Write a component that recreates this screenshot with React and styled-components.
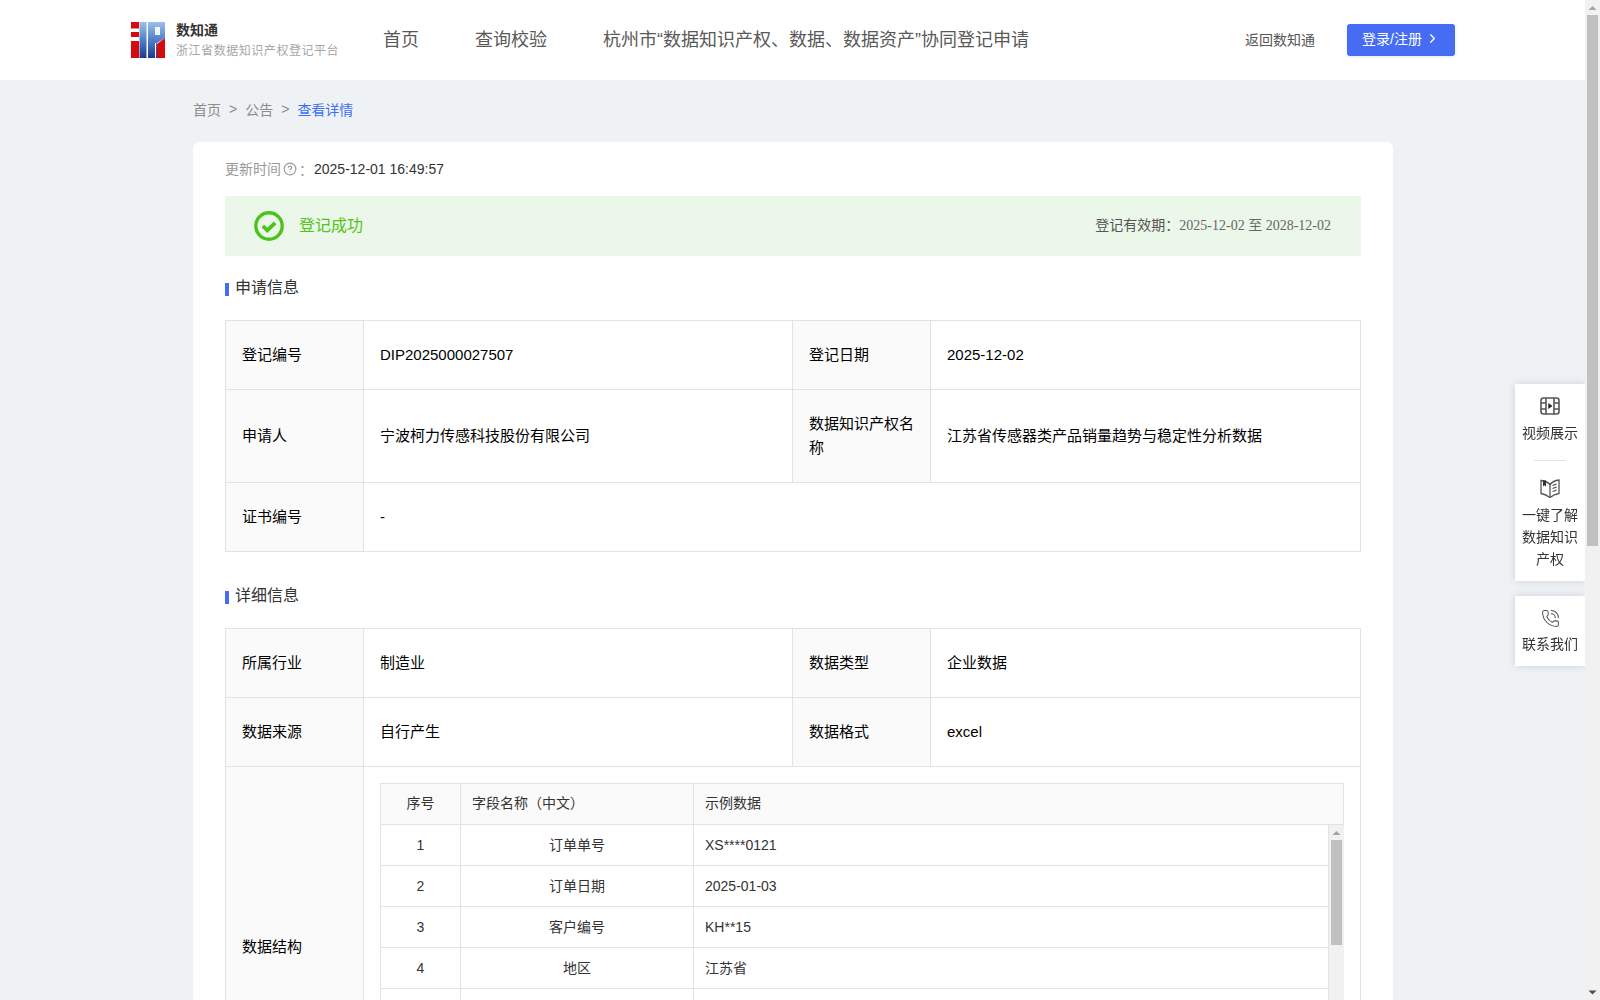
import React from "react";
import styled, { createGlobalStyle } from "styled-components";
import { ChevronRight, CircleHelp, PhoneCall } from "lucide-react";

const Global = createGlobalStyle`
  body {
    margin: 0;
    padding-right: 15px;
    background: #eef2f5;
    font-family: "Liberation Sans", "Noto Sans CJK SC", sans-serif;
    font-size: 14px;
    color: #333;
  }
  * { box-sizing: border-box; }
`;

const Header = styled.header`
  height: 80px;
  background: #fff;
  display: flex;
  align-items: center;
  padding: 0 130px 0 131px;
`;
const Brand = styled.div`
  display: flex;
  align-items: center;
  gap: 11px;
  width: 252px;
`;
const BrandText = styled.div`
  display: flex;
  flex-direction: column;
  gap: 4px;
`;
const BrandName = styled.div`
  font-size: 14px;
  line-height: 18px;
  font-weight: 700;
  color: #333;
`;
const BrandSub = styled.div`
  font-size: 12px;
  line-height: 17px;
  letter-spacing: 0.55px;
  color: #a6a6a6;
  white-space: nowrap;
`;
const Nav = styled.nav`
  display: flex;
  gap: 56px;
  flex: 1;
`;
const NavItem = styled.a`
  font-size: 18px;
  line-height: 24px;
  color: #595959;
  white-space: nowrap;
`;
const BackLink = styled.a`
  font-size: 14px;
  color: #555;
  margin-right: 32px;
  padding-bottom: 2px;
`;
const LoginButton = styled.button`
  width: 108px;
  height: 32px;
  border: 0;
  border-radius: 3px;
  background: #456cf3;
  color: #fff;
  font: inherit;
  font-size: 14px;
  display: flex;
  align-items: center;
  justify-content: center;
  gap: 3px;
  padding: 0 0 4px;
  box-shadow: 0 1px 3px rgba(69, 108, 243, 0.15);
`;

const Main = styled.main`
  width: 1200px;
  margin-left: 193px;
  padding-bottom: 40px;
`;
const Crumbs = styled.div`
  height: 62px;
  display: flex;
  align-items: center;
  gap: 8px;
  padding-bottom: 4px;
  color: #8c8c8c;
  font-size: 14px;
`;
const CrumbActive = styled.span`
  color: #3f6ef5;
`;
const Card = styled.section`
  background: #fff;
  border-radius: 6px;
  padding: 16px 32px 40px;
`;
const UpdateLine = styled.div`
  display: flex;
  align-items: center;
  height: 22px;
  color: #9a9a9a;
  gap: 2px;
`;
const UpdateLabel = styled.span`
  margin-top: -2px;
`;
const UpdateValue = styled.span`
  color: #333;
  margin-left: -1px;
`;
const Banner = styled.div`
  height: 60px;
  margin-top: 16px;
  background: #ebf7e8;
  display: flex;
  align-items: center;
  padding: 0 30px 0 29px;
`;
const BannerTitle = styled.div`
  margin: -4px 0 0 15px;
  font-size: 16px;
  color: #52c41a;
  flex: 1;
`;
const Validity = styled.div`
  font-size: 14px;
  color: #555;
  margin-top: -4px;
`;
const SerifDates = styled.span`
  font-family: "Liberation Serif", "Noto Sans CJK SC", serif;
  color: #666;
`;
const SectionTitle = styled.h2`
  margin: 0;
  height: 64px;
  display: flex;
  align-items: center;
  gap: 6px;
  padding-bottom: 4px;
  font-size: 16px;
  font-weight: 400;
  color: #333;
  &::before {
    content: "";
    width: 4px;
    height: 13px;
    margin-top: 7px;
    background: #456cf3;
  }
`;
const SectionGap = styled.div`
  height: ${(p) => p.$h}px;
`;
const InfoTable = styled.table`
  width: 1135px;
  table-layout: fixed;
  border-collapse: collapse;
  color: #000;
  font-size: 15px;
`;
const Label = styled.td`
  background: #fafafa;
  border: 1px solid #e3e3e3;
  padding: 0 16px 1px;
  line-height: 24px;
  height: ${(p) => p.$h || 69}px;
`;
const Value = styled.td`
  border: 1px solid #e3e3e3;
  padding: ${(p) => (p.$nested ? "16px" : "0 16px 1px")};
  line-height: 24px;
  height: ${(p) => p.$h || 69}px;
`;

const GridHead = styled.div`
  display: grid;
  grid-template-columns: 79px 233px 1fr;
  height: 42px;
  background: #fafafa;
  border: 1px solid #e3e3e3;
  color: #333;
  font-size: 14px;
`;
const HeadCell = styled.div`
  display: flex;
  align-items: center;
  padding: 0 11px 3px;
  justify-content: ${(p) => (p.$center ? "center" : "flex-start")};
  border-left: ${(p) => (p.$first ? "0" : "1px solid #e3e3e3")};
`;
const GridBody = styled.div`
  display: flex;
  height: 287px;
  border-left: 1px solid #e3e3e3;
  border-bottom: 1px solid #e3e3e3;
`;
const GridRows = styled.div`
  flex: 1;
  min-width: 0;
  overflow: hidden;
`;
const GridRow = styled.div`
  display: grid;
  grid-template-columns: 79px 233px 1fr;
  height: 41px;
  border-bottom: 1px solid #e3e3e3;
  border-right: 1px solid #e3e3e3;
  color: #333;
  font-size: 14px;
`;
const GridCell = styled.div`
  display: flex;
  align-items: center;
  padding: 0 11px 1px;
  justify-content: ${(p) => (p.$center ? "center" : "flex-start")};
  border-left: ${(p) => (p.$first ? "0" : "1px solid #e3e3e3")};
`;

const BarArrow = styled.svg`
  display: block;
  flex: none;
  width: 15px;
  height: 15px;
`;
const BarSpace = styled.div`
  flex: 1;
`;
const BarThumb = styled.div`
  flex: none;
  width: 11px;
  height: ${(p) => p.$h}px;
  background: #c1c1c1;
`;
const InnerBar = styled.div`
  flex: none;
  width: 15px;
  background: #f1f1f1;
  display: flex;
  flex-direction: column;
  align-items: center;
`;
const PageBar = styled(InnerBar)`
  position: fixed;
  top: 0;
  right: 0;
  bottom: 0;
  z-index: 2;
`;

const Rail = styled.aside`
  position: fixed;
  top: 384px;
  right: 15px;
  width: 70px;
  display: flex;
  flex-direction: column;
  gap: 15px;
`;
const RailCard = styled.div`
  background: #fff;
  box-shadow: 0 0 8px rgba(40, 50, 70, 0.16);
  padding: 11px 0 11px;
  display: flex;
  flex-direction: column;
  align-items: center;
`;
const RailIcon = styled.div`
  width: 22px;
  height: 22px;
  display: flex;
  align-items: center;
  justify-content: center;
  color: #555;
`;
const RailText = styled.div`
  font-size: 14px;
  line-height: 22px;
  text-align: center;
  color: #333;
  width: 56px;
  margin-top: ${(p) => (p.$tight ? 4 : 5)}px;
`;
const RailDivider = styled.div`
  width: 32px;
  height: 1px;
  background: #e3e3e3;
  margin: 16px 0 16px;
`;

const ArrowUp = () => (
  <BarArrow viewBox="0 0 15 15">
    <path d="M3.500 10L7.500 6L11.500 10Z" fill="#a3a3a3" />
  </BarArrow>
);
const ArrowDown = () => (
  <BarArrow viewBox="0 0 15 15">
    <path d="M3.500 5.500L7.500 9.500L11.500 5.500Z" fill="#505050" />
  </BarArrow>
);

const Logo = () => (
  <svg width="34" height="36" viewBox="0 0 34 36">
    <defs>
      <linearGradient id="lg" x1="0" y1="0" x2="0" y2="1">
        <stop offset="0" stopColor="#9cc0ec" />
        <stop offset="0.5" stopColor="#4f7fc8" />
        <stop offset="1" stopColor="#1d3a8c" />
      </linearGradient>
    </defs>
    <rect x="0" y="0" width="8" height="6.5" fill="#d60a0f" />
    <rect x="0" y="10" width="8" height="5" fill="#d60a0f" />
    <rect x="0" y="19" width="8" height="17" fill="#d60a0f" />
    <rect x="8.500" y="0" width="7" height="36" fill="url(#lg)" />
    <path d="M17 0H34V16L26 21V36H17Z" fill="url(#lg)" />
    <rect x="24" y="5" width="5" height="8" fill="#fff" opacity="0.9" />
    <path d="M26 36V22L34 16V36Z" fill="#d60a0f" />
    <path d="M24.500 36V21" stroke="#fff" strokeWidth="1" />
  </svg>
);

const SuccessIcon = () => (
  <svg width="30" height="30" viewBox="0 0 30 30" fill="none">
    <circle cx="15" cy="15" r="13.200" stroke="#4cc31c" strokeWidth="3.400" />
    <path d="M8.800 15l4.400 4.400 8-7.600" stroke="#4cc31c" strokeWidth="3.800" />
  </svg>
);

const FilmIcon = () => (
  <svg width="20" height="18" viewBox="0 0 20 18" fill="none" stroke="#555" strokeWidth="1.600">
    <rect x="1" y="1" width="18" height="16" rx="2.500" />
    <path d="M6 1v16M14 1v16M1 6h5M1 12h5M14 6h5M14 12h5" />
    <path d="M8.300 6l4.200 3-4.200 3z" fill="#222" stroke="none" />
  </svg>
);

const BookIcon = () => (
  <svg width="20" height="20" viewBox="0 0 20 20" fill="none" stroke="#555" strokeWidth="1.300">
    <path d="M1 2.500c3 0 6 1 9 4 2-2.500 5-4 9-4.500v13.500c-3.500.5-6.500 2-9 4-3-2-6-3.500-9-4z" />
    <path d="M10 6.500v13" />
    <path d="M3 2.500h3v6l-1.500-1.300L3 8.500z" fill="#333" stroke="none" />
    <path d="M12.500 7.500l4-1.300M12.500 10.500l4-1.300M12.500 13.500l4-1.300" />
  </svg>
);

const basicRows = [
  ["订单单号", "XS****0121"],
  ["订单日期", "2025-01-03"],
  ["客户编号", "KH**15"],
  ["地区", "江苏省"],
  ["城市", "南京市"],
  ["产品类别", "压力传感器"],
  ["产品型号", "PT-**20"],
];

export default function App() {
  return (
    <>
      <Global />
      <Header>
        <Brand>
          <Logo />
          <BrandText>
            <BrandName>数知通</BrandName>
            <BrandSub>浙江省数据知识产权登记平台</BrandSub>
          </BrandText>
        </Brand>
        <Nav>
          <NavItem>首页</NavItem>
          <NavItem>查询校验</NavItem>
          <NavItem>杭州市“数据知识产权、数据、数据资产”协同登记申请</NavItem>
        </Nav>
        <BackLink>返回数知通</BackLink>
        <LoginButton>
          登录/注册 <ChevronRight size={15} />
        </LoginButton>
      </Header>
      <Main>
        <Crumbs>
          <span>首页</span>
          <span>&gt;</span>
          <span>公告</span>
          <span>&gt;</span>
          <CrumbActive>查看详情</CrumbActive>
        </Crumbs>
        <Card>
          <UpdateLine>
            <UpdateLabel>更新时间</UpdateLabel>
            <CircleHelp size={14} />
            ：<UpdateValue>2025-12-01 16:49:57</UpdateValue>
          </UpdateLine>
          <Banner>
            <SuccessIcon />
            <BannerTitle>登记成功</BannerTitle>
            <Validity>
              登记有效期：<SerifDates>2025-12-02 至 2028-12-02</SerifDates>
            </Validity>
          </Banner>
          <SectionTitle>申请信息</SectionTitle>
          <InfoTable>
            <colgroup>
              <col width="138" />
              <col width="429" />
              <col width="138" />
              <col width="430" />
            </colgroup>
            <tbody>
              <tr>
                <Label>登记编号</Label>
                <Value>DIP2025000027507</Value>
                <Label>登记日期</Label>
                <Value>2025-12-02</Value>
              </tr>
              <tr>
                <Label $h={93}>申请人</Label>
                <Value $h={93}>宁波柯力传感科技股份有限公司</Value>
                <Label $h={93}>数据知识产权名称</Label>
                <Value $h={93}>江苏省传感器类产品销量趋势与稳定性分析数据</Value>
              </tr>
              <tr>
                <Label>证书编号</Label>
                <Value colSpan={3}>-</Value>
              </tr>
            </tbody>
          </InfoTable>
          <SectionGap $h={12} />
          <SectionTitle>详细信息</SectionTitle>
          <InfoTable>
            <colgroup>
              <col width="138" />
              <col width="429" />
              <col width="138" />
              <col width="430" />
            </colgroup>
            <tbody>
              <tr>
                <Label>所属行业</Label>
                <Value>制造业</Value>
                <Label>数据类型</Label>
                <Value>企业数据</Value>
              </tr>
              <tr>
                <Label>数据来源</Label>
                <Value>自行产生</Value>
                <Label>数据格式</Label>
                <Value>excel</Value>
              </tr>
              <tr>
                <Label>数据结构</Label>
                <Value colSpan={3} $nested>
                  <GridHead>
                    <HeadCell $first $center>序号</HeadCell>
                    <HeadCell>字段名称（中文）</HeadCell>
                    <HeadCell>示例数据</HeadCell>
                  </GridHead>
                  <GridBody>
                    <GridRows>
                      {basicRows.map(([name, sample], i) => (
                        <GridRow key={name}>
                          <GridCell $first $center>{i + 1}</GridCell>
                          <GridCell $center>{name}</GridCell>
                          <GridCell>{sample}</GridCell>
                        </GridRow>
                      ))}
                    </GridRows>
                    <InnerBar>
                      <ArrowUp />
                      <BarThumb $h={105} />
                      <BarSpace />
                      <ArrowDown />
                    </InnerBar>
                  </GridBody>
                </Value>
              </tr>
            </tbody>
          </InfoTable>
        </Card>
      </Main>
      <Rail>
        <RailCard>
          <RailIcon><FilmIcon /></RailIcon>
          <RailText>视频展示</RailText>
          <RailDivider />
          <RailIcon><BookIcon /></RailIcon>
          <RailText>一键了解数据知识产权</RailText>
        </RailCard>
        <RailCard>
          <RailIcon><PhoneCall size={19} strokeWidth={1.3} /></RailIcon>
          <RailText $tight>联系我们</RailText>
        </RailCard>
      </Rail>
      <PageBar>
        <ArrowUp />
        <BarThumb $h={531} />
        <BarSpace />
        <ArrowDown />
      </PageBar>
    </>
  );
}
